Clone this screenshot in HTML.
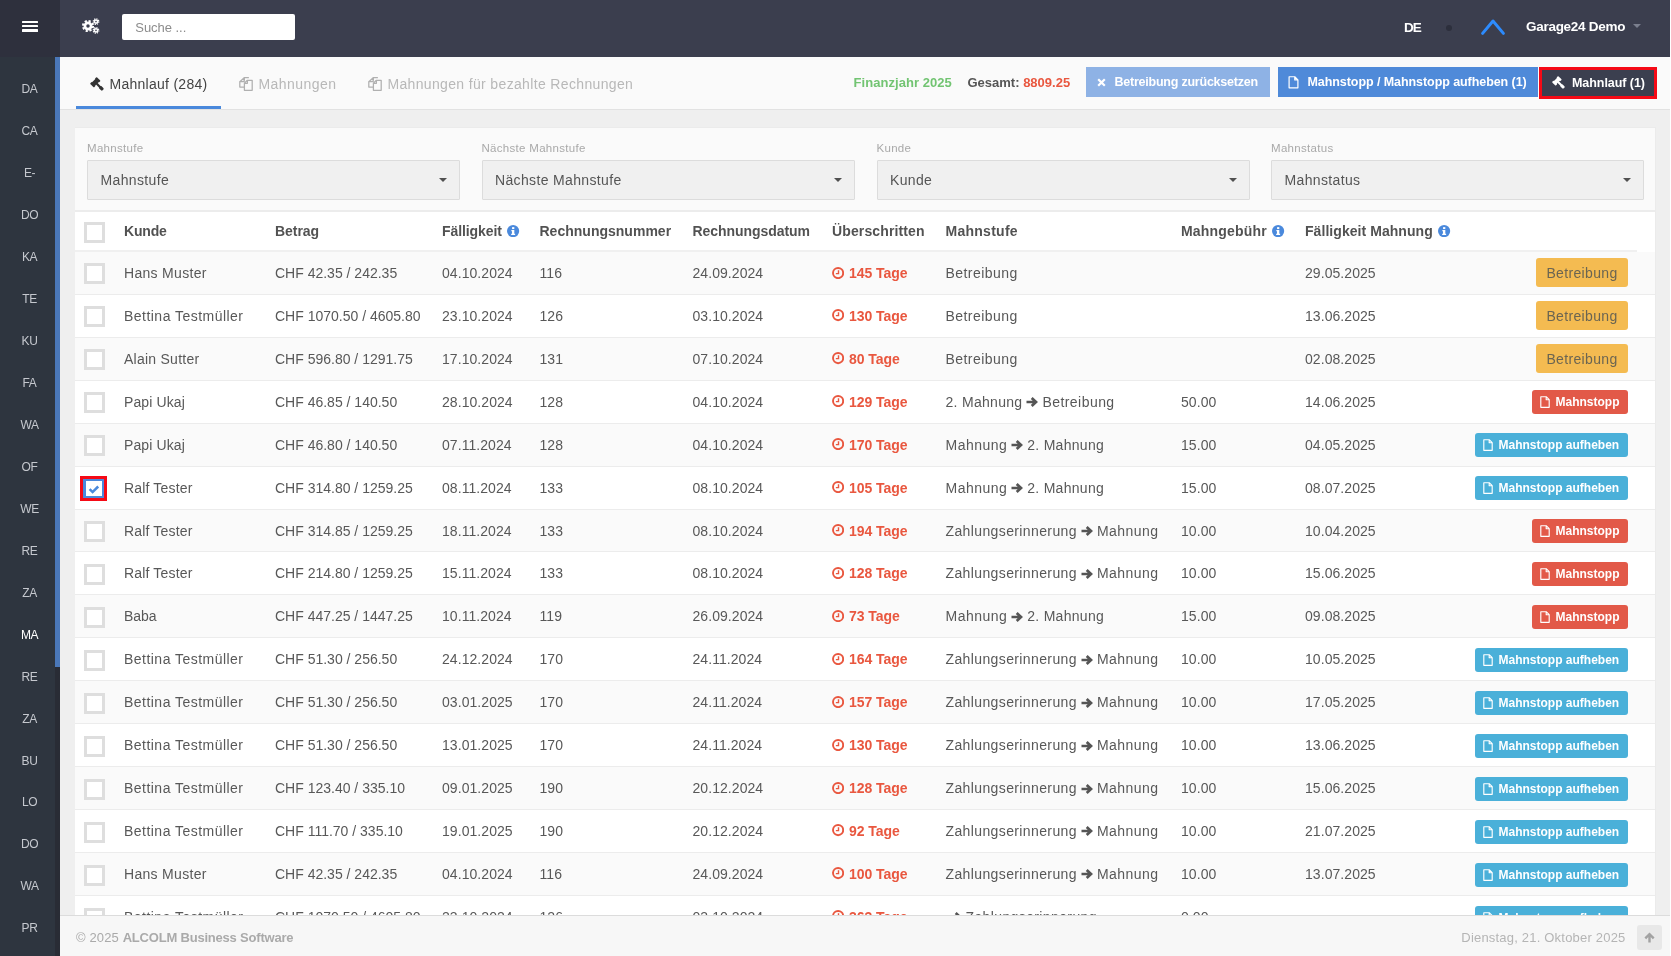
<!DOCTYPE html>
<html lang="de"><head><meta charset="utf-8"><title>Mahnlauf</title>
<style>
*{box-sizing:border-box;margin:0;padding:0}
html,body{width:1671px;height:956px;overflow:hidden;background:#fff}
body{font-family:"Liberation Sans",sans-serif;font-size:14px;color:#585858;position:relative}
.abs{position:absolute}
#topbar{position:absolute;left:0;top:0;width:1670px;height:57px;background:#3b3e4e}
#burger{position:absolute;left:0;top:0;width:60px;height:57px;background:#2e303d}
#burger i{position:absolute;left:22px;width:16px;height:2.3px;background:#fff;border-radius:.5px}
#search{position:absolute;left:122px;top:14px;width:173px;height:26px;background:#fff;border-radius:2px;color:#8c8c8c;font-size:13px;line-height:27px;padding-left:13.3px;letter-spacing:-.04px}
#de{position:absolute;left:1404px;top:18.5px;line-height:18px;font-size:13.5px;font-weight:bold;color:#fff;letter-spacing:-1px}
#dot{position:absolute;left:1446px;top:25px;width:6px;height:6px;border-radius:3px;background:#2c2f3c}
#user{position:absolute;left:1526px;top:17.5px;line-height:18px;font-size:13.5px;font-weight:bold;color:#fff;white-space:nowrap;letter-spacing:-.28px}
#ucaret{position:absolute;left:1632.5px;top:24px;width:0;height:0;border-left:4px solid transparent;border-right:4px solid transparent;border-top:4px solid #7b7f8e}
#sidebar{position:absolute;left:0;top:57px;width:60px;height:899px;background:#2e353f}
#strack{position:absolute;left:55px;top:0;width:5px;height:899px;background:#292c35}
#sthumb{position:absolute;left:55px;top:0;width:5px;height:610px;background:#4a77b8}
.sitem{position:absolute;left:0;margin-top:1px;width:59px;text-align:center;font-size:12px;line-height:20px;color:#c5c8ce;letter-spacing:-.4px}
.sitem.act{color:#fff}
#tabbar{position:absolute;left:60px;top:57px;width:1610px;height:52px;background:#fafafa}
#tabline{position:absolute;left:60px;top:109px;width:1610px;height:1px;background:#e2e2e2}
#content{position:absolute;left:60px;top:110px;width:1610px;height:805px;background:#efefef}
.tab{position:absolute;top:0;height:52px;line-height:54px;white-space:nowrap;font-size:14px}
.tab svg{position:absolute;left:1px;top:20px;width:14px;height:14px}
#tab1{color:#444}
#tab1u{position:absolute;left:16px;top:49px;width:145px;height:3px;background:#4a89dc}
.tab.off{color:#b8b8b8}
#fy{position:absolute;left:853.5px;top:72px;line-height:21px;letter-spacing:.05px;font-size:13px;font-weight:bold;color:#72c472;white-space:nowrap}
#ges{position:absolute;left:967.5px;top:72px;line-height:21px;font-size:13px;font-weight:bold;color:#555;white-space:nowrap}
#ges b{color:#e9573f}
.tbtn{position:absolute;top:67px;height:30px;line-height:30px;color:#fff;font-size:12.5px;font-weight:bold;white-space:nowrap}
.tbtn span{position:absolute;top:0}
#b1{left:1086px;width:184px;background:#8eb2e5}
#b2{left:1278px;width:260px;background:#4f8ad9}
#b3{left:1539px;width:118px;height:32px;background:#3b3f4f;border:3px solid #f50a16;line-height:26px}
#card{position:absolute;left:75px;top:127px;width:1581px;height:790px;background:#fff}
#filters{position:absolute;left:0;top:0;width:1581px;height:84px;background:#fafafa}
#fline{position:absolute;left:0;top:83px;width:1581px;height:2px;background:#ececec}
.flabel{position:absolute;top:13px;font-size:11.5px;line-height:16px;color:#a9a9a9;white-space:nowrap;letter-spacing:.3px}
.fsel{position:absolute;top:33px;width:373px;height:40px;border:1px solid #dcdcdc;background:#f0f0f0;border-radius:1px;font-size:14px;line-height:38px;padding-left:12.5px;color:#555;letter-spacing:.35px}
.fsel:after{content:"";position:absolute;right:12px;top:17px;border-left:4px solid transparent;border-right:4px solid transparent;border-top:4px solid #505050}
#thead{position:absolute;left:0;top:85px;width:1581px;height:39px;background:#fff}
#theadline{position:absolute;left:0;top:123px;width:1562px;height:2px;background:#f0f0f0}
.th{position:absolute;top:0;line-height:38px;font-weight:bold;color:#525252;font-size:14px;white-space:nowrap}
.th svg{display:inline-block;width:12.2px;height:12.2px;margin-left:5.6px;vertical-align:-1px}
#tbody{position:absolute;left:0;top:125px;width:1581px}
.tr{position:relative;height:42.93px;border-bottom:1px solid #ececec;background:#fff}
.tr.odd{background:#fafafa}
.c{position:absolute;top:0;height:42px;line-height:42px;white-space:nowrap}
.c0{left:9px}.c1{left:49px}.c2{left:200px}.c3{left:367px}.c4{left:464.5px}.c5{left:617.5px}.c6{left:757px}.c7{left:870.5px}.c8{left:1106px}.c9{left:1230px}.c10{right:28px;text-align:right}
.t{letter-spacing:.45px}
.n{letter-spacing:.06px}
.c2 .n{letter-spacing:0}
.cb{position:absolute;left:0;top:11px;width:21px;height:21px;border:3px solid #dedede;background:#fff}
.cbsel{position:absolute;left:-3.6px;top:9.2px;width:26.8px;height:24.4px;border:3px solid #f50a16;background:#4a89dc}
.cbin{position:absolute;left:3px;top:1.5px;right:2px;bottom:1.5px;background:#fff}
.cbin svg{position:absolute;left:2px;top:2.2px;width:12px;height:12px}
.ic-clock{position:absolute;left:-0.4px;top:14.5px;width:12.2px;height:12.2px}
.ov{position:absolute;left:17px;top:0;font-weight:bold;color:#e9573f;letter-spacing:-.05px}
.ic-arrow{display:inline-block;width:12px;height:12px;margin:0 4px 0 4px;vertical-align:-1.5px}
.badge-b{position:absolute;right:0;top:6px;width:92px;height:29px;line-height:30px;border-radius:3px;background:#f4bb51;color:#6b6552;text-align:center;font-size:14px;letter-spacing:.35px}
.btn-s{position:absolute;right:0;top:9px;height:24px;line-height:24px;border-radius:3px;color:#fff;font-weight:bold;font-size:12px}
.btn-s span{position:absolute;left:23.5px;top:0}
.btn-s.red{width:96px;background:#e25948}
.btn-s.blue{width:153px;background:#4ab0d9}
.ic-file{position:absolute;left:8px;top:6px;width:10px;height:12px}
#footer{position:absolute;left:60px;top:915px;width:1610px;height:41px;background:#f7f7f7;border-top:1px solid #dcdcdc;color:#aaa;font-size:13px}
#fleft{position:absolute;left:16px;top:12px;line-height:20px;white-space:nowrap;letter-spacing:.13px}
#fleft b{letter-spacing:-.2px}
#fright{position:absolute;right:44.5px;top:12px;line-height:20px;white-space:nowrap;letter-spacing:.2px;color:#b5b5b5}
#totop{position:absolute;left:1577px;top:9px;width:25px;height:25px;background:#e8e8e8;border-radius:3px}

.ic-gavel{position:absolute;width:14px;height:14px}
#tab1 .ic-gavel{left:30.4px;top:20px}
#b3 .ic-gavel{left:10px;top:6px;width:13px;height:13px}
#b2 .ic-file{left:0;top:0;width:11px;height:12.6px}

#cardb{position:absolute;left:0;top:0;width:1581px;height:790px;border:1px solid #ebebeb;border-bottom:0;border-left:0}
#wrap{position:absolute;left:0;top:0;width:1671px;height:956px;will-change:transform}

</style></head><body>
<div id="wrap">
<div id="topbar">
 <div id="burger"><i style="top:20.8px"></i><i style="top:25.1px"></i><i style="top:29.3px"></i></div>
 <svg class="abs" style="left:82px;top:18px;width:18px;height:16px" viewBox="0 0 18 16"><g fill="none" stroke="#fff"><circle cx="6" cy="8" r="3.1" stroke-width="2.7"/><circle cx="6" cy="8" r="5.1" stroke-width="1.9" stroke-dasharray="2.2 1.8"/><circle cx="14" cy="3.6" r="1.6" stroke-width="1.6"/><circle cx="14" cy="3.6" r="2.8" stroke-width="1.2" stroke-dasharray="1.2 1"/><circle cx="14" cy="12.4" r="1.6" stroke-width="1.6"/><circle cx="14" cy="12.4" r="2.8" stroke-width="1.2" stroke-dasharray="1.2 1"/></g></svg>
 <div id="search">Suche ...</div>
 <div id="de">DE</div><div id="dot"></div>
 <svg class="abs" style="left:1478px;top:16px;width:30px;height:22px" viewBox="0 0 30 22"><path d="M4.6 17.4L15 5l10.4 12.4" fill="none" stroke="#2d8bfd" stroke-width="3" stroke-linecap="round" stroke-linejoin="round"/></svg>
 <div id="user">Garage24 Demo</div><div id="ucaret"></div>
</div>
<div id="sidebar"><div id="strack"></div><div id="sthumb"></div>
<div class="sitem" style="top:21.00px">DA</div>
<div class="sitem" style="top:62.97px">CA</div>
<div class="sitem" style="top:104.94px">E-</div>
<div class="sitem" style="top:146.91px">DO</div>
<div class="sitem" style="top:188.88px">KA</div>
<div class="sitem" style="top:230.85px">TE</div>
<div class="sitem" style="top:272.82px">KU</div>
<div class="sitem" style="top:314.79px">FA</div>
<div class="sitem" style="top:356.76px">WA</div>
<div class="sitem" style="top:398.73px">OF</div>
<div class="sitem" style="top:440.70px">WE</div>
<div class="sitem" style="top:482.67px">RE</div>
<div class="sitem" style="top:524.64px">ZA</div>
<div class="sitem act" style="top:566.61px">MA</div>
<div class="sitem" style="top:608.58px">RE</div>
<div class="sitem" style="top:650.55px">ZA</div>
<div class="sitem" style="top:692.52px">BU</div>
<div class="sitem" style="top:734.49px">LO</div>
<div class="sitem" style="top:776.46px">DO</div>
<div class="sitem" style="top:818.43px">WA</div>
<div class="sitem" style="top:860.40px">PR</div>
</div>
<div id="tabbar">
 <div class="tab" id="tab1" style="left:0;width:170px"><svg class="ic-gavel" viewBox="0 0 14 14"><g fill="#333" transform="translate(5.25 5.25) rotate(-45)"><rect x="-4.7" y="-2.8" width="2.5" height="5.6" rx="0.8"/><rect x="2.2" y="-2.8" width="2.5" height="5.6" rx="0.8"/><rect x="-3" y="-2.2" width="6" height="4.4"/><rect x="-1.15" y="1.5" width="2.3" height="8" /><rect x="-1.6" y="6.3" width="3.2" height="4.6" rx="1.1"/></g></svg><span style="position:absolute;left:49.5px;letter-spacing:.27px">Mahnlauf (284)</span></div>
 <div id="tab1u"></div>
 <div class="tab off" style="left:178px"><svg class="ic-files" viewBox="0 0 14 14"><g fill="none" stroke="#b0b0b0" stroke-width="1.25" stroke-linejoin="round"><path d="M5.2 3.3v-2.6h4.2l-4.2 0 M5.2 0.7l-4.4 4v5.4h4.6"/><path d="M0.8 4.7h4.4v-4"/><path d="M5.4 13.3v-7l3-3h4.8v10z"/><path d="M5.4 6.3h3v-3"/></g></svg><span style="position:absolute;left:20.4px;letter-spacing:.45px">Mahnungen</span></div>
 <div class="tab off" style="left:307px"><svg class="ic-files" viewBox="0 0 14 14"><g fill="none" stroke="#b0b0b0" stroke-width="1.25" stroke-linejoin="round"><path d="M5.2 3.3v-2.6h4.2l-4.2 0 M5.2 0.7l-4.4 4v5.4h4.6"/><path d="M0.8 4.7h4.4v-4"/><path d="M5.4 13.3v-7l3-3h4.8v10z"/><path d="M5.4 6.3h3v-3"/></g></svg><span style="position:absolute;left:20.4px;letter-spacing:.35px">Mahnungen für bezahlte Rechnungen</span></div>
</div>
<div id="tabline"></div>
<div id="fy">Finanzjahr 2025</div>
<div id="ges">Gesamt: <b>8809.25</b></div>
<div class="tbtn" id="b1"><svg class="abs" style="left:11px;top:10.5px;width:9px;height:9px" viewBox="0 0 9 9"><path d="M1.2 1.2l6.6 6.6M7.8 1.2l-6.6 6.6" stroke="#fff" stroke-width="2.2" fill="none"/></svg><span style="left:28.5px;letter-spacing:-.23px">Betreibung zurücksetzen</span></div>
<div class="tbtn" id="b2"><span style="left:10px;top:9px;width:10px;height:12px"><svg class="ic-file" viewBox="0 0 10 12"><path d="M0.8 0.7h5.4l3 3v7.6h-8.4z M6.2 0.7v3h3" fill="none" stroke="#fff" stroke-width="1.15" stroke-linejoin="round"/></svg></span><span style="left:29.5px;letter-spacing:-.07px">Mahnstopp / Mahnstopp aufheben (1)</span></div>
<div class="tbtn" id="b3"><svg class="ic-gavel" viewBox="0 0 14 14"><g fill="#fff" transform="translate(5.25 5.25) rotate(-45)"><rect x="-4.7" y="-2.8" width="2.5" height="5.6" rx="0.8"/><rect x="2.2" y="-2.8" width="2.5" height="5.6" rx="0.8"/><rect x="-3" y="-2.2" width="6" height="4.4"/><rect x="-1.15" y="1.5" width="2.3" height="8" /><rect x="-1.6" y="6.3" width="3.2" height="4.6" rx="1.1"/></g></svg><span style="left:30px;letter-spacing:-.06px">Mahnlauf (1)</span></div>
<div id="content"></div>
<div id="card">
 <div id="filters">
  <div class="flabel" style="left:12px">Mahnstufe</div><div class="fsel" style="left:12px">Mahnstufe</div>
  <div class="flabel" style="left:406.5px">Nächste Mahnstufe</div><div class="fsel" style="left:406.5px">Nächste Mahnstufe</div>
  <div class="flabel" style="left:801.5px">Kunde</div><div class="fsel" style="left:801.5px">Kunde</div>
  <div class="flabel" style="left:1196px">Mahnstatus</div><div class="fsel" style="left:1196px">Mahnstatus</div>
 </div>
 <div id="fline"></div>
 <div id="thead">
  <div class="th" style="left:9px"><span class="cb" style="top:10px"></span></div>
  <div class="th" style="left:49px"><span style="letter-spacing:-0.172px">Kunde</span></div>
  <div class="th" style="left:200px"><span style="letter-spacing:-0.043px">Betrag</span></div>
  <div class="th" style="left:367px"><span style="letter-spacing:-0.089px">Fälligkeit</span><svg class="ic-info" viewBox="0 0 12 12"><circle cx="6" cy="6" r="6" fill="#4a89dc"/><rect x="5" y="2.1" width="2.2" height="1.9" fill="#fff"/><path d="M4.3 5h2.9v3.6h0.8v1.2h-3.9v-1.2h0.8v-2.4h-0.6z" fill="#fff"/></svg></div>
  <div class="th" style="left:464.5px"><span style="letter-spacing:0.009px">Rechnungsnummer</span></div>
  <div class="th" style="left:617.5px"><span style="letter-spacing:-0.052px">Rechnungsdatum</span></div>
  <div class="th" style="left:757px"><span style="letter-spacing:0.128px">Überschritten</span></div>
  <div class="th" style="left:870.5px"><span style="letter-spacing:0.267px">Mahnstufe</span></div>
  <div class="th" style="left:1106px"><span style="letter-spacing:0.18px">Mahngebühr</span><svg class="ic-info" viewBox="0 0 12 12"><circle cx="6" cy="6" r="6" fill="#4a89dc"/><rect x="5" y="2.1" width="2.2" height="1.9" fill="#fff"/><path d="M4.3 5h2.9v3.6h0.8v1.2h-3.9v-1.2h0.8v-2.4h-0.6z" fill="#fff"/></svg></div>
  <div class="th" style="left:1230px"><span style="letter-spacing:0.057px">Fälligkeit Mahnung</span><svg class="ic-info" viewBox="0 0 12 12"><circle cx="6" cy="6" r="6" fill="#4a89dc"/><rect x="5" y="2.1" width="2.2" height="1.9" fill="#fff"/><path d="M4.3 5h2.9v3.6h0.8v1.2h-3.9v-1.2h0.8v-2.4h-0.6z" fill="#fff"/></svg></div>
 </div>
 <div id="theadline"></div>
 <div id="tbody">
<div class="tr odd"><div class="c c0"><span class="cb" style="margin-top:0.0px"></span></div><div class="c c1"><span class="t" style="letter-spacing:0.304px">Hans Muster</span></div><div class="c c2"><span class="n">CHF 42.35 / 242.35</span></div><div class="c c3"><span class="n">04.10.2024</span></div><div class="c c4"><span class="n">116</span></div><div class="c c5"><span class="n">24.09.2024</span></div><div class="c c6"><svg class="ic-clock" viewBox="0 0 12 12"><circle cx="6" cy="6" r="5" fill="none" stroke="#e9573f" stroke-width="1.9"/><path d="M6.4 3.2v3.3h-2.6" fill="none" stroke="#e9573f" stroke-width="1.4"/></svg><span class="ov">145 Tage</span></div><div class="c c7"><span class="t" style="letter-spacing:0.448px">Betreibung</span></div><div class="c c8"><span class="n"></span></div><div class="c c9"><span class="n">29.05.2025</span></div><div class="c c10"><span class="badge-b" style="margin-top:0.0px">Betreibung</span></div></div>
<div class="tr even"><div class="c c0"><span class="cb" style="margin-top:0.07px"></span></div><div class="c c1"><span class="t" style="letter-spacing:0.471px">Bettina Testmüller</span></div><div class="c c2"><span class="n">CHF 1070.50 / 4605.80</span></div><div class="c c3"><span class="n">23.10.2024</span></div><div class="c c4"><span class="n">126</span></div><div class="c c5"><span class="n">03.10.2024</span></div><div class="c c6"><svg class="ic-clock" viewBox="0 0 12 12"><circle cx="6" cy="6" r="5" fill="none" stroke="#e9573f" stroke-width="1.9"/><path d="M6.4 3.2v3.3h-2.6" fill="none" stroke="#e9573f" stroke-width="1.4"/></svg><span class="ov">130 Tage</span></div><div class="c c7"><span class="t" style="letter-spacing:0.448px">Betreibung</span></div><div class="c c8"><span class="n"></span></div><div class="c c9"><span class="n">13.06.2025</span></div><div class="c c10"><span class="badge-b" style="margin-top:0.07px">Betreibung</span></div></div>
<div class="tr odd"><div class="c c0"><span class="cb" style="margin-top:0.14px"></span></div><div class="c c1"><span class="t" style="letter-spacing:0.252px">Alain Sutter</span></div><div class="c c2"><span class="n">CHF 596.80 / 1291.75</span></div><div class="c c3"><span class="n">17.10.2024</span></div><div class="c c4"><span class="n">131</span></div><div class="c c5"><span class="n">07.10.2024</span></div><div class="c c6"><svg class="ic-clock" viewBox="0 0 12 12"><circle cx="6" cy="6" r="5" fill="none" stroke="#e9573f" stroke-width="1.9"/><path d="M6.4 3.2v3.3h-2.6" fill="none" stroke="#e9573f" stroke-width="1.4"/></svg><span class="ov">80 Tage</span></div><div class="c c7"><span class="t" style="letter-spacing:0.448px">Betreibung</span></div><div class="c c8"><span class="n"></span></div><div class="c c9"><span class="n">02.08.2025</span></div><div class="c c10"><span class="badge-b" style="margin-top:0.14px">Betreibung</span></div></div>
<div class="tr even"><div class="c c0"><span class="cb" style="margin-top:0.21px"></span></div><div class="c c1"><span class="t" style="letter-spacing:0.109px">Papi Ukaj</span></div><div class="c c2"><span class="n">CHF 46.85 / 140.50</span></div><div class="c c3"><span class="n">28.10.2024</span></div><div class="c c4"><span class="n">128</span></div><div class="c c5"><span class="n">04.10.2024</span></div><div class="c c6"><svg class="ic-clock" viewBox="0 0 12 12"><circle cx="6" cy="6" r="5" fill="none" stroke="#e9573f" stroke-width="1.9"/><path d="M6.4 3.2v3.3h-2.6" fill="none" stroke="#e9573f" stroke-width="1.4"/></svg><span class="ov">129 Tage</span></div><div class="c c7"><span class="t" style="letter-spacing:0.295px">2. Mahnung</span><svg class="ic-arrow" viewBox="0 0 12 12"><path d="M0.5 6h8.6M5.7 2l4.3 4-4.3 4" fill="none" stroke="#555" stroke-width="2.7" stroke-linejoin="miter"/></svg><span class="t" style="letter-spacing:0.448px">Betreibung</span></div><div class="c c8"><span class="n">50.00</span></div><div class="c c9"><span class="n">14.06.2025</span></div><div class="c c10"><span class="btn-s red" style="margin-top:0.21px"><svg class="ic-file" viewBox="0 0 10 12"><path d="M0.8 0.7h5.4l3 3v7.6h-8.4z M6.2 0.7v3h3" fill="none" stroke="#fff" stroke-width="1.15" stroke-linejoin="round"/></svg><span>Mahnstopp</span></span></div></div>
<div class="tr odd"><div class="c c0"><span class="cb" style="margin-top:0.28px"></span></div><div class="c c1"><span class="t" style="letter-spacing:0.109px">Papi Ukaj</span></div><div class="c c2"><span class="n">CHF 46.80 / 140.50</span></div><div class="c c3"><span class="n">07.11.2024</span></div><div class="c c4"><span class="n">128</span></div><div class="c c5"><span class="n">04.10.2024</span></div><div class="c c6"><svg class="ic-clock" viewBox="0 0 12 12"><circle cx="6" cy="6" r="5" fill="none" stroke="#e9573f" stroke-width="1.9"/><path d="M6.4 3.2v3.3h-2.6" fill="none" stroke="#e9573f" stroke-width="1.4"/></svg><span class="ov">170 Tage</span></div><div class="c c7"><span class="t" style="letter-spacing:0.473px">Mahnung</span><svg class="ic-arrow" viewBox="0 0 12 12"><path d="M0.5 6h8.6M5.7 2l4.3 4-4.3 4" fill="none" stroke="#555" stroke-width="2.7" stroke-linejoin="miter"/></svg><span class="t" style="letter-spacing:0.295px">2. Mahnung</span></div><div class="c c8"><span class="n">15.00</span></div><div class="c c9"><span class="n">04.05.2025</span></div><div class="c c10"><span class="btn-s blue" style="margin-top:0.28px"><svg class="ic-file" viewBox="0 0 10 12"><path d="M0.8 0.7h5.4l3 3v7.6h-8.4z M6.2 0.7v3h3" fill="none" stroke="#fff" stroke-width="1.15" stroke-linejoin="round"/></svg><span>Mahnstopp aufheben</span></span></div></div>
<div class="tr even"><div class="c c0"><span class="cbsel" style="margin-top:0.35px"><span class="cbin"><svg viewBox="0 0 12 12"><path d="M1.6 6.1l3 3 5.6-5.6" fill="none" stroke="#4a89dc" stroke-width="2.5"/></svg></span></span></div><div class="c c1"><span class="t" style="letter-spacing:0.166px">Ralf Tester</span></div><div class="c c2"><span class="n">CHF 314.80 / 1259.25</span></div><div class="c c3"><span class="n">08.11.2024</span></div><div class="c c4"><span class="n">133</span></div><div class="c c5"><span class="n">08.10.2024</span></div><div class="c c6"><svg class="ic-clock" viewBox="0 0 12 12"><circle cx="6" cy="6" r="5" fill="none" stroke="#e9573f" stroke-width="1.9"/><path d="M6.4 3.2v3.3h-2.6" fill="none" stroke="#e9573f" stroke-width="1.4"/></svg><span class="ov">105 Tage</span></div><div class="c c7"><span class="t" style="letter-spacing:0.473px">Mahnung</span><svg class="ic-arrow" viewBox="0 0 12 12"><path d="M0.5 6h8.6M5.7 2l4.3 4-4.3 4" fill="none" stroke="#555" stroke-width="2.7" stroke-linejoin="miter"/></svg><span class="t" style="letter-spacing:0.295px">2. Mahnung</span></div><div class="c c8"><span class="n">15.00</span></div><div class="c c9"><span class="n">08.07.2025</span></div><div class="c c10"><span class="btn-s blue" style="margin-top:0.35px"><svg class="ic-file" viewBox="0 0 10 12"><path d="M0.8 0.7h5.4l3 3v7.6h-8.4z M6.2 0.7v3h3" fill="none" stroke="#fff" stroke-width="1.15" stroke-linejoin="round"/></svg><span>Mahnstopp aufheben</span></span></div></div>
<div class="tr odd"><div class="c c0"><span class="cb" style="margin-top:0.42px"></span></div><div class="c c1"><span class="t" style="letter-spacing:0.166px">Ralf Tester</span></div><div class="c c2"><span class="n">CHF 314.85 / 1259.25</span></div><div class="c c3"><span class="n">18.11.2024</span></div><div class="c c4"><span class="n">133</span></div><div class="c c5"><span class="n">08.10.2024</span></div><div class="c c6"><svg class="ic-clock" viewBox="0 0 12 12"><circle cx="6" cy="6" r="5" fill="none" stroke="#e9573f" stroke-width="1.9"/><path d="M6.4 3.2v3.3h-2.6" fill="none" stroke="#e9573f" stroke-width="1.4"/></svg><span class="ov">194 Tage</span></div><div class="c c7"><span class="t" style="letter-spacing:0.382px">Zahlungserinnerung</span><svg class="ic-arrow" viewBox="0 0 12 12"><path d="M0.5 6h8.6M5.7 2l4.3 4-4.3 4" fill="none" stroke="#555" stroke-width="2.7" stroke-linejoin="miter"/></svg><span class="t" style="letter-spacing:0.473px">Mahnung</span></div><div class="c c8"><span class="n">10.00</span></div><div class="c c9"><span class="n">10.04.2025</span></div><div class="c c10"><span class="btn-s red" style="margin-top:0.42px"><svg class="ic-file" viewBox="0 0 10 12"><path d="M0.8 0.7h5.4l3 3v7.6h-8.4z M6.2 0.7v3h3" fill="none" stroke="#fff" stroke-width="1.15" stroke-linejoin="round"/></svg><span>Mahnstopp</span></span></div></div>
<div class="tr even"><div class="c c0"><span class="cb" style="margin-top:0.49px"></span></div><div class="c c1"><span class="t" style="letter-spacing:0.166px">Ralf Tester</span></div><div class="c c2"><span class="n">CHF 214.80 / 1259.25</span></div><div class="c c3"><span class="n">15.11.2024</span></div><div class="c c4"><span class="n">133</span></div><div class="c c5"><span class="n">08.10.2024</span></div><div class="c c6"><svg class="ic-clock" viewBox="0 0 12 12"><circle cx="6" cy="6" r="5" fill="none" stroke="#e9573f" stroke-width="1.9"/><path d="M6.4 3.2v3.3h-2.6" fill="none" stroke="#e9573f" stroke-width="1.4"/></svg><span class="ov">128 Tage</span></div><div class="c c7"><span class="t" style="letter-spacing:0.382px">Zahlungserinnerung</span><svg class="ic-arrow" viewBox="0 0 12 12"><path d="M0.5 6h8.6M5.7 2l4.3 4-4.3 4" fill="none" stroke="#555" stroke-width="2.7" stroke-linejoin="miter"/></svg><span class="t" style="letter-spacing:0.473px">Mahnung</span></div><div class="c c8"><span class="n">10.00</span></div><div class="c c9"><span class="n">15.06.2025</span></div><div class="c c10"><span class="btn-s red" style="margin-top:0.49px"><svg class="ic-file" viewBox="0 0 10 12"><path d="M0.8 0.7h5.4l3 3v7.6h-8.4z M6.2 0.7v3h3" fill="none" stroke="#fff" stroke-width="1.15" stroke-linejoin="round"/></svg><span>Mahnstopp</span></span></div></div>
<div class="tr odd"><div class="c c0"><span class="cb" style="margin-top:0.56px"></span></div><div class="c c1"><span class="t" style="letter-spacing:-0.026px">Baba</span></div><div class="c c2"><span class="n">CHF 447.25 / 1447.25</span></div><div class="c c3"><span class="n">10.11.2024</span></div><div class="c c4"><span class="n">119</span></div><div class="c c5"><span class="n">26.09.2024</span></div><div class="c c6"><svg class="ic-clock" viewBox="0 0 12 12"><circle cx="6" cy="6" r="5" fill="none" stroke="#e9573f" stroke-width="1.9"/><path d="M6.4 3.2v3.3h-2.6" fill="none" stroke="#e9573f" stroke-width="1.4"/></svg><span class="ov">73 Tage</span></div><div class="c c7"><span class="t" style="letter-spacing:0.473px">Mahnung</span><svg class="ic-arrow" viewBox="0 0 12 12"><path d="M0.5 6h8.6M5.7 2l4.3 4-4.3 4" fill="none" stroke="#555" stroke-width="2.7" stroke-linejoin="miter"/></svg><span class="t" style="letter-spacing:0.295px">2. Mahnung</span></div><div class="c c8"><span class="n">15.00</span></div><div class="c c9"><span class="n">09.08.2025</span></div><div class="c c10"><span class="btn-s red" style="margin-top:0.56px"><svg class="ic-file" viewBox="0 0 10 12"><path d="M0.8 0.7h5.4l3 3v7.6h-8.4z M6.2 0.7v3h3" fill="none" stroke="#fff" stroke-width="1.15" stroke-linejoin="round"/></svg><span>Mahnstopp</span></span></div></div>
<div class="tr even"><div class="c c0"><span class="cb" style="margin-top:0.63px"></span></div><div class="c c1"><span class="t" style="letter-spacing:0.471px">Bettina Testmüller</span></div><div class="c c2"><span class="n">CHF 51.30 / 256.50</span></div><div class="c c3"><span class="n">24.12.2024</span></div><div class="c c4"><span class="n">170</span></div><div class="c c5"><span class="n">24.11.2024</span></div><div class="c c6"><svg class="ic-clock" viewBox="0 0 12 12"><circle cx="6" cy="6" r="5" fill="none" stroke="#e9573f" stroke-width="1.9"/><path d="M6.4 3.2v3.3h-2.6" fill="none" stroke="#e9573f" stroke-width="1.4"/></svg><span class="ov">164 Tage</span></div><div class="c c7"><span class="t" style="letter-spacing:0.382px">Zahlungserinnerung</span><svg class="ic-arrow" viewBox="0 0 12 12"><path d="M0.5 6h8.6M5.7 2l4.3 4-4.3 4" fill="none" stroke="#555" stroke-width="2.7" stroke-linejoin="miter"/></svg><span class="t" style="letter-spacing:0.473px">Mahnung</span></div><div class="c c8"><span class="n">10.00</span></div><div class="c c9"><span class="n">10.05.2025</span></div><div class="c c10"><span class="btn-s blue" style="margin-top:0.63px"><svg class="ic-file" viewBox="0 0 10 12"><path d="M0.8 0.7h5.4l3 3v7.6h-8.4z M6.2 0.7v3h3" fill="none" stroke="#fff" stroke-width="1.15" stroke-linejoin="round"/></svg><span>Mahnstopp aufheben</span></span></div></div>
<div class="tr odd"><div class="c c0"><span class="cb" style="margin-top:0.7px"></span></div><div class="c c1"><span class="t" style="letter-spacing:0.471px">Bettina Testmüller</span></div><div class="c c2"><span class="n">CHF 51.30 / 256.50</span></div><div class="c c3"><span class="n">03.01.2025</span></div><div class="c c4"><span class="n">170</span></div><div class="c c5"><span class="n">24.11.2024</span></div><div class="c c6"><svg class="ic-clock" viewBox="0 0 12 12"><circle cx="6" cy="6" r="5" fill="none" stroke="#e9573f" stroke-width="1.9"/><path d="M6.4 3.2v3.3h-2.6" fill="none" stroke="#e9573f" stroke-width="1.4"/></svg><span class="ov">157 Tage</span></div><div class="c c7"><span class="t" style="letter-spacing:0.382px">Zahlungserinnerung</span><svg class="ic-arrow" viewBox="0 0 12 12"><path d="M0.5 6h8.6M5.7 2l4.3 4-4.3 4" fill="none" stroke="#555" stroke-width="2.7" stroke-linejoin="miter"/></svg><span class="t" style="letter-spacing:0.473px">Mahnung</span></div><div class="c c8"><span class="n">10.00</span></div><div class="c c9"><span class="n">17.05.2025</span></div><div class="c c10"><span class="btn-s blue" style="margin-top:0.7px"><svg class="ic-file" viewBox="0 0 10 12"><path d="M0.8 0.7h5.4l3 3v7.6h-8.4z M6.2 0.7v3h3" fill="none" stroke="#fff" stroke-width="1.15" stroke-linejoin="round"/></svg><span>Mahnstopp aufheben</span></span></div></div>
<div class="tr even"><div class="c c0"><span class="cb" style="margin-top:0.77px"></span></div><div class="c c1"><span class="t" style="letter-spacing:0.471px">Bettina Testmüller</span></div><div class="c c2"><span class="n">CHF 51.30 / 256.50</span></div><div class="c c3"><span class="n">13.01.2025</span></div><div class="c c4"><span class="n">170</span></div><div class="c c5"><span class="n">24.11.2024</span></div><div class="c c6"><svg class="ic-clock" viewBox="0 0 12 12"><circle cx="6" cy="6" r="5" fill="none" stroke="#e9573f" stroke-width="1.9"/><path d="M6.4 3.2v3.3h-2.6" fill="none" stroke="#e9573f" stroke-width="1.4"/></svg><span class="ov">130 Tage</span></div><div class="c c7"><span class="t" style="letter-spacing:0.382px">Zahlungserinnerung</span><svg class="ic-arrow" viewBox="0 0 12 12"><path d="M0.5 6h8.6M5.7 2l4.3 4-4.3 4" fill="none" stroke="#555" stroke-width="2.7" stroke-linejoin="miter"/></svg><span class="t" style="letter-spacing:0.473px">Mahnung</span></div><div class="c c8"><span class="n">10.00</span></div><div class="c c9"><span class="n">13.06.2025</span></div><div class="c c10"><span class="btn-s blue" style="margin-top:0.77px"><svg class="ic-file" viewBox="0 0 10 12"><path d="M0.8 0.7h5.4l3 3v7.6h-8.4z M6.2 0.7v3h3" fill="none" stroke="#fff" stroke-width="1.15" stroke-linejoin="round"/></svg><span>Mahnstopp aufheben</span></span></div></div>
<div class="tr odd"><div class="c c0"><span class="cb" style="margin-top:0.84px"></span></div><div class="c c1"><span class="t" style="letter-spacing:0.471px">Bettina Testmüller</span></div><div class="c c2"><span class="n">CHF 123.40 / 335.10</span></div><div class="c c3"><span class="n">09.01.2025</span></div><div class="c c4"><span class="n">190</span></div><div class="c c5"><span class="n">20.12.2024</span></div><div class="c c6"><svg class="ic-clock" viewBox="0 0 12 12"><circle cx="6" cy="6" r="5" fill="none" stroke="#e9573f" stroke-width="1.9"/><path d="M6.4 3.2v3.3h-2.6" fill="none" stroke="#e9573f" stroke-width="1.4"/></svg><span class="ov">128 Tage</span></div><div class="c c7"><span class="t" style="letter-spacing:0.382px">Zahlungserinnerung</span><svg class="ic-arrow" viewBox="0 0 12 12"><path d="M0.5 6h8.6M5.7 2l4.3 4-4.3 4" fill="none" stroke="#555" stroke-width="2.7" stroke-linejoin="miter"/></svg><span class="t" style="letter-spacing:0.473px">Mahnung</span></div><div class="c c8"><span class="n">10.00</span></div><div class="c c9"><span class="n">15.06.2025</span></div><div class="c c10"><span class="btn-s blue" style="margin-top:0.84px"><svg class="ic-file" viewBox="0 0 10 12"><path d="M0.8 0.7h5.4l3 3v7.6h-8.4z M6.2 0.7v3h3" fill="none" stroke="#fff" stroke-width="1.15" stroke-linejoin="round"/></svg><span>Mahnstopp aufheben</span></span></div></div>
<div class="tr even"><div class="c c0"><span class="cb" style="margin-top:0.91px"></span></div><div class="c c1"><span class="t" style="letter-spacing:0.471px">Bettina Testmüller</span></div><div class="c c2"><span class="n">CHF 111.70 / 335.10</span></div><div class="c c3"><span class="n">19.01.2025</span></div><div class="c c4"><span class="n">190</span></div><div class="c c5"><span class="n">20.12.2024</span></div><div class="c c6"><svg class="ic-clock" viewBox="0 0 12 12"><circle cx="6" cy="6" r="5" fill="none" stroke="#e9573f" stroke-width="1.9"/><path d="M6.4 3.2v3.3h-2.6" fill="none" stroke="#e9573f" stroke-width="1.4"/></svg><span class="ov">92 Tage</span></div><div class="c c7"><span class="t" style="letter-spacing:0.382px">Zahlungserinnerung</span><svg class="ic-arrow" viewBox="0 0 12 12"><path d="M0.5 6h8.6M5.7 2l4.3 4-4.3 4" fill="none" stroke="#555" stroke-width="2.7" stroke-linejoin="miter"/></svg><span class="t" style="letter-spacing:0.473px">Mahnung</span></div><div class="c c8"><span class="n">10.00</span></div><div class="c c9"><span class="n">21.07.2025</span></div><div class="c c10"><span class="btn-s blue" style="margin-top:0.91px"><svg class="ic-file" viewBox="0 0 10 12"><path d="M0.8 0.7h5.4l3 3v7.6h-8.4z M6.2 0.7v3h3" fill="none" stroke="#fff" stroke-width="1.15" stroke-linejoin="round"/></svg><span>Mahnstopp aufheben</span></span></div></div>
<div class="tr odd"><div class="c c0"><span class="cb" style="margin-top:0.98px"></span></div><div class="c c1"><span class="t" style="letter-spacing:0.304px">Hans Muster</span></div><div class="c c2"><span class="n">CHF 42.35 / 242.35</span></div><div class="c c3"><span class="n">04.10.2024</span></div><div class="c c4"><span class="n">116</span></div><div class="c c5"><span class="n">24.09.2024</span></div><div class="c c6"><svg class="ic-clock" viewBox="0 0 12 12"><circle cx="6" cy="6" r="5" fill="none" stroke="#e9573f" stroke-width="1.9"/><path d="M6.4 3.2v3.3h-2.6" fill="none" stroke="#e9573f" stroke-width="1.4"/></svg><span class="ov">100 Tage</span></div><div class="c c7"><span class="t" style="letter-spacing:0.382px">Zahlungserinnerung</span><svg class="ic-arrow" viewBox="0 0 12 12"><path d="M0.5 6h8.6M5.7 2l4.3 4-4.3 4" fill="none" stroke="#555" stroke-width="2.7" stroke-linejoin="miter"/></svg><span class="t" style="letter-spacing:0.473px">Mahnung</span></div><div class="c c8"><span class="n">10.00</span></div><div class="c c9"><span class="n">13.07.2025</span></div><div class="c c10"><span class="btn-s blue" style="margin-top:0.98px"><svg class="ic-file" viewBox="0 0 10 12"><path d="M0.8 0.7h5.4l3 3v7.6h-8.4z M6.2 0.7v3h3" fill="none" stroke="#fff" stroke-width="1.15" stroke-linejoin="round"/></svg><span>Mahnstopp aufheben</span></span></div></div>
<div class="tr even"><div class="c c0"><span class="cb" style="margin-top:1.05px"></span></div><div class="c c1"><span class="t" style="letter-spacing:0.471px">Bettina Testmüller</span></div><div class="c c2"><span class="n">CHF 1070.50 / 4605.80</span></div><div class="c c3"><span class="n">23.10.2024</span></div><div class="c c4"><span class="n">126</span></div><div class="c c5"><span class="n">03.10.2024</span></div><div class="c c6"><svg class="ic-clock" viewBox="0 0 12 12"><circle cx="6" cy="6" r="5" fill="none" stroke="#e9573f" stroke-width="1.9"/><path d="M6.4 3.2v3.3h-2.6" fill="none" stroke="#e9573f" stroke-width="1.4"/></svg><span class="ov">363 Tage</span></div><div class="c c7"><span class="t"></span><svg class="ic-arrow" viewBox="0 0 12 12"><path d="M0.5 6h8.6M5.7 2l4.3 4-4.3 4" fill="none" stroke="#555" stroke-width="2.7" stroke-linejoin="miter"/></svg><span class="t" style="letter-spacing:0.382px">Zahlungserinnerung</span></div><div class="c c8"><span class="n">0.00</span></div><div class="c c9"><span class="n"></span></div><div class="c c10"><span class="btn-s blue" style="margin-top:1.05px"><svg class="ic-file" viewBox="0 0 10 12"><path d="M0.8 0.7h5.4l3 3v7.6h-8.4z M6.2 0.7v3h3" fill="none" stroke="#fff" stroke-width="1.15" stroke-linejoin="round"/></svg><span>Mahnstopp aufheben</span></span></div></div>
 </div>
 <div id="cardb"></div>
</div>
<div id="footer">
 <div id="fleft">© 2025 <b>ALCOLM Business Software</b></div>
 <div id="fright">Dienstag, 21. Oktober 2025</div>
 <div id="totop"><svg class="abs" style="left:7px;top:7px;width:11px;height:11px" viewBox="0 0 11 11"><path d="M5.5 10.6V2.6M1.3 6.3l4.2-4.2 4.2 4.2" fill="none" stroke="#a2a2a2" stroke-width="2.4"/></svg></div>
</div>
</div>
</body></html>
